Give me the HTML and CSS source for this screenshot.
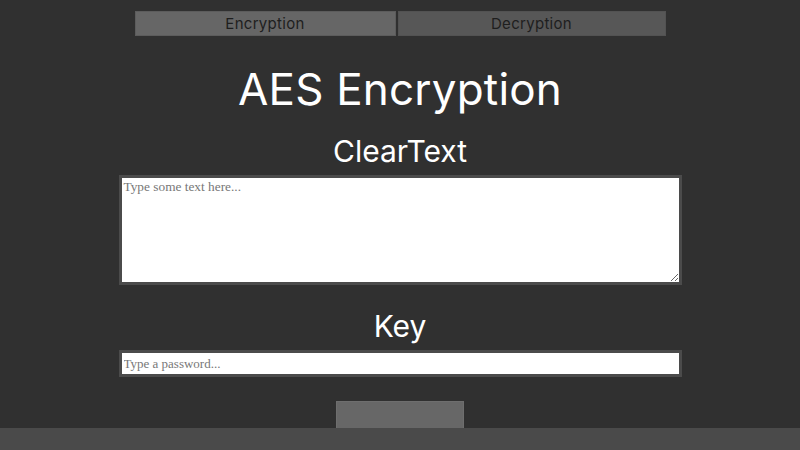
FILE: index.html
```html
<!DOCTYPE html>
<html>
<head>
<meta charset="utf-8">
<link rel="stylesheet" href="styles.css">
</head>
<body>
<nav class="tabs">
  <button class="tab tab-active">Encryption</button>
  <button class="tab tab-other">Decryption</button>
</nav>
<main class="main">
  <h1 class="title">AES Encryption</h1>
  <h2 class="label">ClearText</h2>
  <textarea class="cleartext" placeholder="Type some text here..."></textarea>
  <h2 class="label label-key">Key</h2>
  <input class="key" type="password" placeholder="Type a password...">
  <button class="submit"></button>
</main>
<footer class="footer"></footer>
</body>
</html>
```
FILE: styles.css
```css
html, body {
  margin: 0;
  padding: 0;
  background: #303030;
  height: 100%;
  overflow: hidden;
}
body {
  font-family: Inter, "DejaVu Sans", sans-serif;
  color: #ffffff;
}
.tabs {
  display: flex;
  justify-content: center;
  gap: 2px;
  padding-top: 11px;
}
.tab {
  height: 25px;
  border: 1px solid #5c5c5c;
  font-family: Inter, sans-serif;
  font-size: 15px;
  letter-spacing: 0.3px;
  color: #1e1e1e;
  padding: 0;
  margin: 0;
}
.tab-active {
  width: 261px;
  background: #666666;
}
.tab-other {
  width: 268px;
  background: #575757;
  border-color: #525252;
}
.main {
  display: flex;
  flex-direction: column;
  align-items: center;
}
.title {
  margin: 31px 0 0;
  font-size: 44px;
  line-height: 44px;
  font-weight: 400;
  letter-spacing: 0.2px;
}
.label {
  margin: 25px 0 0;
  font-size: 30px;
  line-height: 30px;
  font-weight: 400;
}
.label-key {
  margin-top: 26px;
}
.cleartext {
  box-sizing: border-box;
  margin: 9px 0 0;
  width: 563px;
  height: 110px;
  border: 3px solid #4b4b4b;
  padding: 1px 2px;
  font-family: "Liberation Serif", serif;
  font-size: 13.33px;
  background: #ffffff;
}
.key {
  box-sizing: border-box;
  margin: 9px 0 0;
  width: 563px;
  height: 27px;
  border: 3px solid #4b4b4b;
  padding: 1px 2px;
  font-family: "Liberation Serif", serif;
  font-size: 13px;
  background: #ffffff;
}
.cleartext::placeholder, .key::placeholder {
  color: #777777;
}
.submit {
  margin: 24px 0 0;
  width: 128px;
  height: 36px;
  background: #676767;
  border: 1px solid #6e6e6e;
}
.footer {
  position: fixed;
  left: 0;
  right: 0;
  bottom: 0;
  height: 22px;
  background: #4a4a4a;
}
```
